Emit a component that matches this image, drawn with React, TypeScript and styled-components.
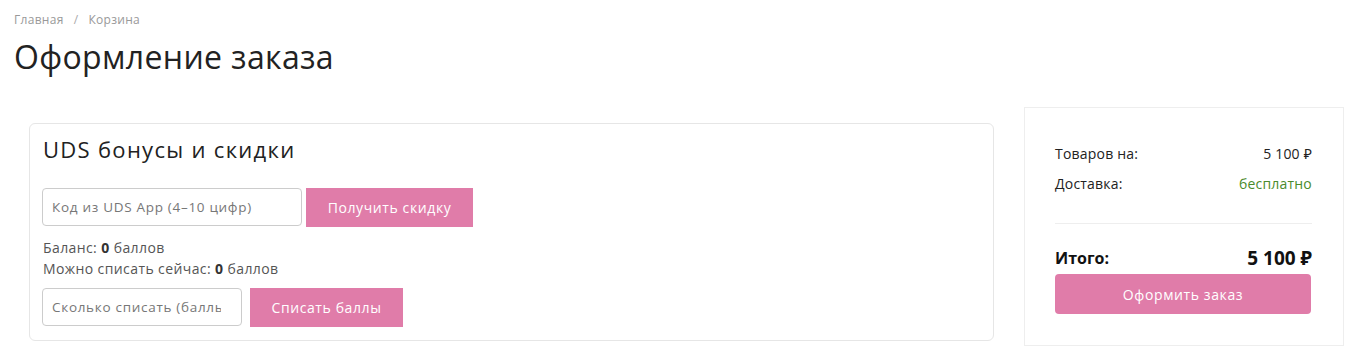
import React from "react";
import styled, { createGlobalStyle } from "styled-components";

const GlobalStyle = createGlobalStyle`
  html, body { margin: 0; padding: 0; background: #fff; }
  body { font-family: "Open Sans", "Noto Sans", Arial, sans-serif; color: #222; }
  * { box-sizing: border-box; }
`;

const Page = styled.div`
  padding: 0 14px;
  width: 1364px;
`;

const Breadcrumbs = styled.nav`
  display: flex;
  align-items: center;
  gap: 10px;
  padding-top: 12px;
  font-size: 12px;
  line-height: 16px;
  color: #999;
  letter-spacing: 0.3px;
`;

const Crumb = styled.span``;
const Sep = styled.span`color: #aaa;`;

const Title = styled.h1`
  margin: 9px 0 0;
  font-size: 32px;
  line-height: 40px;
  font-weight: 400;
  letter-spacing: 0.35px;
  color: #222;
`;

const Layout = styled.div`
  display: flex;
  align-items: flex-start;
  margin-top: 30px;
`;

const Main = styled.section`
  width: 965px;
  margin: 16px 0 0 15px;
  border: 1px solid #e6e6e6;
  border-radius: 6px;
  padding: 12px 12px 13px;
`;

const CardTitle = styled.h2`
  margin: 0 0 26px 1px;
  font-size: 22px;
  line-height: 26px;
  font-weight: 400;
  letter-spacing: 1.3px;
  color: #222;
`;

const FormRow = styled.div<{ $gap: number }>`
  display: flex;
  align-items: flex-start;
  gap: ${(p) => p.$gap}px;
`;

const Input = styled.input<{ $w: number }>`
  width: ${(p) => p.$w}px;
  height: 38px;
  border: 1px solid #ccc;
  border-radius: 4px;
  padding: 0 20px 0 9px;
  font: inherit;
  font-size: 13.5px;
  letter-spacing: 0.7px;
  color: #222;
  outline: none;
  &::placeholder { color: #777; }
`;

const PinkButton = styled.button<{ $w: number; $radius?: number }>`
  width: ${(p) => p.$w}px;
  height: ${(p) => (p.$radius ? 40 : 39)}px;
  border: 0;
  border-radius: ${(p) => p.$radius ?? 0}px;
  background: #e07ca9;
  color: #fff;
  font: inherit;
  font-size: 14px;
  letter-spacing: 0.6px;
  cursor: pointer;
`;

const Info = styled.div`
  margin: 10px 0 9px 1px;
  font-size: 14px;
  line-height: 21px;
  letter-spacing: 0.4px;
  color: #555;
  b { color: #333; font-weight: 700; }
`;

const Aside = styled.aside`
  width: 320px;
  margin-left: 30px;
  border: 1px solid #eee;
  padding: 36px 31px 31px 30px;
`;

const SumRow = styled.div`
  display: flex;
  justify-content: space-between;
  align-items: center;
  font-size: 14px;
  line-height: 20px;
  letter-spacing: 0.2px;
  color: #222;
  & + & { margin-top: 10px; }
`;

const Free = styled.span`color: #4a8b2c;`;

const Divider = styled.hr`
  margin: 29px 0 23px;
  border: 0;
  border-top: 1px solid #eee;
`;

const TotalRow = styled.div`
  display: flex;
  justify-content: space-between;
  align-items: center;
  font-weight: 700;
  line-height: 22px;
  color: #111;
  margin-bottom: 5px;
`;

const TotalLabel = styled.span`font-size: 16px;`;
const TotalValue = styled.span`font-size: 19px;`;

export default function App() {
  return (
    <>
      <GlobalStyle />
      <Page>
        <Breadcrumbs>
          <Crumb>Главная</Crumb>
          <Sep>/</Sep>
          <Crumb>Корзина</Crumb>
        </Breadcrumbs>
        <Title>Оформление заказа</Title>
        <Layout>
          <Main>
            <CardTitle>UDS бонусы и скидки</CardTitle>
            <FormRow $gap={4}>
              <Input $w={260} placeholder="Код из UDS App (4–10 цифр)" />
              <PinkButton $w={167}>Получить скидку</PinkButton>
            </FormRow>
            <Info>
              <div>Баланс: <b>0</b> баллов</div>
              <div>Можно списать сейчас: <b>0</b> баллов</div>
            </Info>
            <FormRow $gap={8}>
              <Input $w={200} placeholder="Сколько списать (баллы)" />
              <PinkButton $w={153}>Списать баллы</PinkButton>
            </FormRow>
          </Main>
          <Aside>
            <SumRow>
              <span>Товаров на:</span>
              <span>5 100 ₽</span>
            </SumRow>
            <SumRow>
              <span>Доставка:</span>
              <Free>бесплатно</Free>
            </SumRow>
            <Divider />
            <TotalRow>
              <TotalLabel>Итого:</TotalLabel>
              <TotalValue>5 100 ₽</TotalValue>
            </TotalRow>
            <PinkButton $w={256} $radius={4}>Оформить заказ</PinkButton>
          </Aside>
        </Layout>
      </Page>
    </>
  );
}
